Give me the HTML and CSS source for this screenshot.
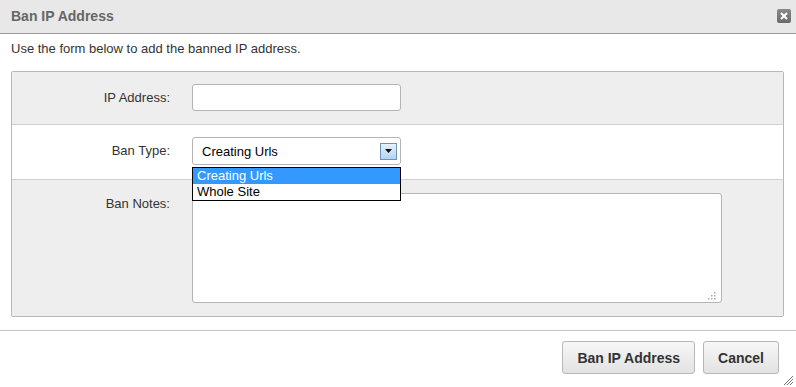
FILE: index.html
```html
<!DOCTYPE html>
<html lang="en">

<head>
    <meta charset="UTF-8">
    <title>Ban IP Address</title>
    <link rel="stylesheet" href="styles.css">
</head>

<body>
    <div class="dialog">
        <div class="dialogHeader">
            <span class="dialogTitle">Ban IP Address</span>
            <span class="closeBtn">
                <svg width="8" height="8" viewBox="0 0 8 8">
                    <path d="M1 1 L7 7 M7 1 L1 7" stroke="#fff" stroke-width="2" />
                </svg>
            </span>
        </div>
        <div class="dialogBody">
            <p class="intro">Use the form below to add the banned IP address.</p>
            <div class="formPanel">
                <div class="formRow rowGrey rowFirst">
                    <label class="formLabel">IP Address:</label>
                    <div class="textInput"></div>
                </div>
                <div class="formRow rowWhite">
                    <label class="formLabel">Ban Type:</label>
                    <div class="selectWrap">
                        <div class="selectBox">
                            <span>Creating Urls</span>
                            <span class="selectArrow">
                                <svg width="7" height="4" viewBox="0 0 7 4">
                                    <path d="M0 0 H7 L3.5 4 Z" fill="#111" />
                                </svg>
                            </span>
                        </div>
                        <ul class="selectList">
                            <li class="selected">Creating Urls</li>
                            <li>Whole Site</li>
                        </ul>
                    </div>
                </div>
                <div class="formRow rowGrey rowLast">
                    <label class="formLabel notesLabel">Ban Notes:</label>
                    <div class="textArea">
                        <span class="grip">
                            <svg width="9" height="9" viewBox="0 0 9 9">
                                <g fill="#aaa">
                                    <rect x="7" y="1" width="1.5" height="1.5" />
                                    <rect x="4" y="4" width="1.5" height="1.5" />
                                    <rect x="7" y="4" width="1.5" height="1.5" />
                                    <rect x="1" y="7" width="1.5" height="1.5" />
                                    <rect x="4" y="7" width="1.5" height="1.5" />
                                    <rect x="7" y="7" width="1.5" height="1.5" />
                                </g>
                            </svg>
                        </span>
                    </div>
                </div>
            </div>
        </div>
        <div class="dialogFooter">
            <button class="btn">Ban IP Address</button>
            <button class="btn">Cancel</button>
            <span class="resizeGrip">
                <svg width="12" height="12" viewBox="0 0 12 12">
                    <path d="M11 2 L2 11 M11 5 L5 11 M11 8 L8 11" stroke="#777" stroke-width="1" />
                </svg>
            </span>
        </div>
    </div>
</body>

</html>
```

FILE: styles.css
```css
body {
    margin: 0;
    background-color: #fff;
    font-family: "Liberation Sans", Arial, sans-serif;
    color: #333;
}

.dialog {
    width: 796px;
    height: 387px;
    position: relative;
    overflow: hidden;
}

.dialogHeader {
    height: 33px;
    background-color: #e8e8e8;
    border-bottom: 1px solid #9a9a9a;
    display: flex;
    align-items: center;
    justify-content: space-between;
    padding: 0 5px 0 11px;
}

.dialogTitle {
    font-size: 14px;
    font-weight: bold;
    color: #666;
    margin-top: -1px;
}

.closeBtn {
    width: 14px;
    height: 14px;
    border-radius: 2px;
    background: linear-gradient(#8a8a8a, #6a6a6a);
    display: flex;
    align-items: center;
    justify-content: center;
    margin-top: -2px;
}

.dialogBody {
    padding: 0 12px 0 11px;
}

.intro {
    margin: 0;
    padding: 7px 0 0;
    height: 29px;
    font-size: 13px;
    color: #333;
    box-sizing: border-box;
}

.formPanel {
    margin-top: 8px;
    border: 1px solid #b8b8b8;
    border-radius: 2px;
}

.formRow {
    display: flex;
    align-items: flex-start;
    border-bottom: 1px solid #d0d0d0;
    box-sizing: border-box;
}

.rowGrey {
    background-color: #eeeeee;
}

.rowWhite {
    background-color: #fff;
    height: 55px;
    padding-top: 12px;
}

.rowFirst {
    height: 53px;
    padding-top: 12px;
}

.rowLast {
    border-bottom: none;
    height: 136px;
    padding-top: 13px;
}

.formLabel {
    width: 158px;
    text-align: right;
    font-size: 13px;
    color: #333;
    margin-right: 22px;
    line-height: 27px;
}

.notesLabel {
    line-height: 22px;
}

.textInput {
    width: 207px;
    height: 25px;
    border: 1px solid #b4b4b4;
    border-radius: 3px;
    background-color: #fff;
}

.selectWrap {
    position: relative;
    z-index: 2;
}

.selectBox {
    width: 209px;
    height: 28px;
    border: 1px solid #b4b4b4;
    border-radius: 3px;
    background-color: #fff;
    box-sizing: border-box;
    display: flex;
    align-items: center;
    justify-content: space-between;
    padding: 0 3px 0 9px;
    font-size: 13px;
    color: #000;
}

.selectArrow {
    width: 17px;
    height: 17px;
    border: 1px solid #6f93b8;
    box-sizing: border-box;
    background: linear-gradient(#e6f1fb, #b5d3f0);
    display: flex;
    align-items: center;
    justify-content: center;
}

.selectList {
    position: absolute;
    top: 30px;
    left: 0;
    width: 209px;
    margin: 0;
    padding: 0;
    list-style: none;
    border: 1px solid #000;
    box-sizing: border-box;
    background-color: #fff;
    font-size: 13px;
    color: #000;
}

.selectList li {
    height: 16px;
    line-height: 16px;
    padding-left: 4px;
}

.selectList li.selected {
    background-color: #3399ff;
    color: #fff;
}

.textArea {
    width: 528px;
    height: 108px;
    border: 1px solid #b4b4b4;
    border-radius: 3px;
    background-color: #fff;
    position: relative;
}

.grip {
    position: absolute;
    right: 5px;
    bottom: 2px;
    line-height: 0;
}

.dialogFooter {
    margin-top: 13px;
    border-top: 1px solid #c4c4c4;
    display: flex;
    justify-content: flex-end;
    gap: 8px;
    padding: 10px 17px 0 0;
}

.btn {
    height: 33px;
    padding: 0 14px;
    font-family: "Liberation Sans", Arial, sans-serif;
    font-size: 14px;
    font-weight: bold;
    color: #333;
    border: 1px solid #b8b8b8;
    border-radius: 3px;
    background: linear-gradient(#f7f7f7, #e2e2e2);
}

.resizeGrip {
    position: absolute;
    right: 2px;
    bottom: 1px;
    line-height: 0;
}
```
